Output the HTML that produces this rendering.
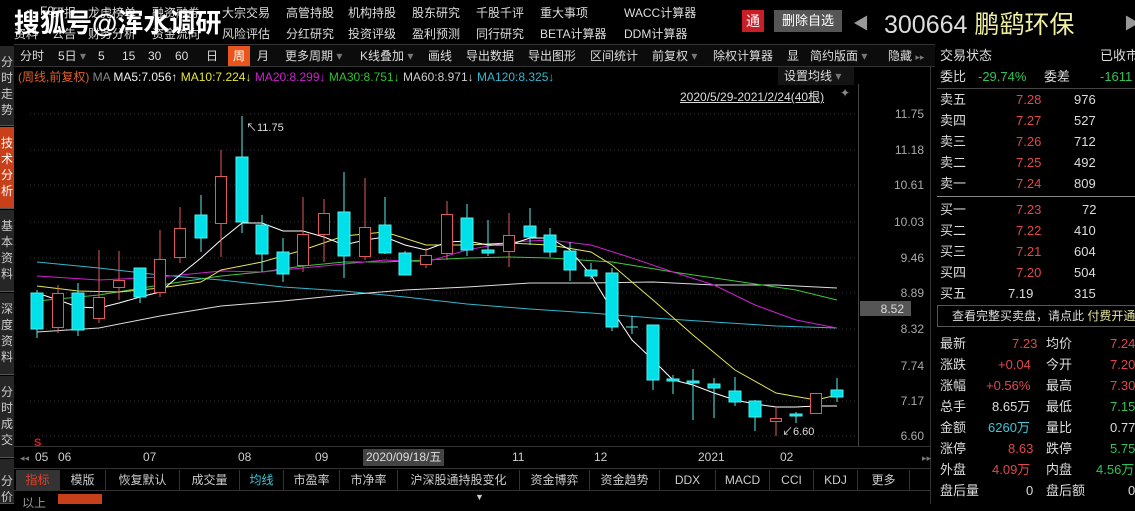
<!DOCTYPE html>
<html><head><meta charset="utf-8"><style>
*{margin:0;padding:0;box-sizing:border-box}
body{width:1135px;height:504px;background:#000;overflow:hidden;position:relative;font-family:"Liberation Sans","Noto Sans CJK SC",sans-serif;font-size:12px;color:#ccc}
.a{position:absolute;white-space:nowrap}
.menu span{position:absolute;color:#ddd;font-size:12px;white-space:nowrap}
.tb{position:absolute;top:46px;height:20px;line-height:20px;color:#ddd;font-size:12px;white-space:nowrap}
.side{position:absolute;left:0;width:14px;background:#262626;color:#ccc;font-size:12px;line-height:16px;text-align:center;border-bottom:1px solid #555}
.r{position:absolute;left:940px;font-size:13px;line-height:21px;height:21px;color:#ddd;white-space:nowrap}
.red{color:#e0484e}.grn{color:#2fc35b}.cy{color:#3cc8d8}
.tab{position:absolute;top:470px;height:20px;line-height:20px;color:#ccc;font-size:12px;border-right:1px solid #333;text-align:center;white-space:nowrap}
</style></head><body>
<div class="menu">
<span style="left:40px;top:4px">F9</span><span style="left:52px;top:4px">研报</span><span style="left:88px;top:4px">龙虎榜单</span><span style="left:152px;top:4px">融资融券</span><span style="left:222px;top:4px">大宗交易</span><span style="left:286px;top:4px">高管持股</span><span style="left:348px;top:4px">机构持股</span><span style="left:412px;top:4px">股东研究</span><span style="left:476px;top:4px">千股千评</span><span style="left:540px;top:4px">重大事项</span><span style="left:624px;top:4px">WACC计算器</span>
<span style="left:14px;top:25px">资料</span><span style="left:52px;top:25px">公告</span><span style="left:88px;top:25px">财务分析</span><span style="left:152px;top:25px">资金流向</span>
<span style="left:222px;top:25px">风险评估</span><span style="left:286px;top:25px">分红研究</span><span style="left:348px;top:25px">投资评级</span><span style="left:412px;top:25px">盈利预测</span><span style="left:476px;top:25px">同行研究</span><span style="left:540px;top:25px">BETA计算器</span><span style="left:624px;top:25px">DDM计算器</span>
</div>
<div class="a" style="left:14px;top:3px;font-size:26px;color:#fff;font-weight:bold">搜狐号@浑水调研</div>
<div class="a" style="left:742px;top:10px;width:22px;height:22px;background:#c81e28;color:#fff;font-size:14px;text-align:center;line-height:22px">通</div>
<div class="a" style="left:774px;top:10px;width:68px;height:22px;background:#555;color:#fff;font-size:13px;text-align:center;line-height:22px">删除自选</div>
<div class="a" style="left:853px;top:10px;color:#999;font-size:16px">◀</div>
<div class="a" style="left:884px;top:5px;color:#ddd;font-size:25px">300664 <span style="color:#f0f0a0">鹏鹞环保</span></div>
<div class="a" style="left:1124px;top:10px;color:#999;font-size:16px">▶</div>
<div class="a" style="left:14px;top:44px;width:921px;height:1px;background:#333"></div>
<div class="a" style="left:14px;top:45px;width:921px;height:22px;background:#0c0c0c;border-bottom:1px solid #333"></div>
<div class="tb" style="left:20px">分时</div><div class="tb" style="left:58px">5日 <span style="color:#777">▾</span></div><div class="tb" style="left:98px">5</div><div class="tb" style="left:122px">15</div><div class="tb" style="left:148px">30</div><div class="tb" style="left:175px">60</div><div class="tb" style="left:206px">日</div>
<div class="tb" style="left:228px;width:22px;background:#e8561c;color:#fff;text-align:center">周</div><div class="tb" style="left:257px">月</div><div class="tb" style="left:285px">更多周期 <span style="color:#777">▾</span></div><div class="tb" style="left:360px">K线叠加 <span style="color:#777">▾</span></div><div class="tb" style="left:428px">画线</div><div class="tb" style="left:466px">导出数据</div><div class="tb" style="left:528px">导出图形</div><div class="tb" style="left:590px">区间统计</div><div class="tb" style="left:652px">前复权 <span style="color:#777">▾</span></div><div class="tb" style="left:713px">除权计算器</div><div class="tb" style="left:787px">显</div><div class="tb" style="left:810px">简约版面 <span style="color:#777">▾</span></div><div class="tb" style="left:888px">隐藏 <span style="color:#777;font-size:9px">▸▸</span></div>
<div class="a" style="left:18px;top:68px;font-size:12px"><span style="color:#e0602c">(周线,前复权)</span> <span style="color:#888">MA</span> <span style="color:#eee">MA5:7.056↑</span> <span style="color:#e6e632">MA10:7.224↓</span> <span style="color:#d020d0">MA20:8.299↓</span> <span style="color:#2ec02e">MA30:8.751↓</span> <span style="color:#ccc">MA60:8.971↓</span> <span style="color:#30b8d0">MA120:8.325↓</span></div>
<div class="a" style="left:778px;top:67px;width:76px;height:18px;background:#141414;color:#ddd;line-height:18px;padding-left:6px">设置均线 <span style="color:#777">▾</span></div>
<div class="a" style="left:680px;top:88px;color:#ddd;text-decoration:underline">2020/5/29-2021/2/24(40根)</div><div class="a" style="left:840px;top:86px;color:#888">✦</div>
<div class="side" style="top:46px;height:80px;padding-top:8px">分<br>时<br>走<br>势</div>
<div class="side" style="top:127px;height:82px;background:#c8401a;color:#fff;padding-top:8px">技<br>术<br>分<br>析</div>
<div class="side" style="top:210px;height:82px;padding-top:8px">基<br>本<br>资<br>料</div>
<div class="side" style="top:293px;height:82px;padding-top:8px">深<br>度<br>资<br>料</div>
<div class="side" style="top:376px;height:82px;padding-top:8px">分<br>时<br>成<br>交</div>
<div class="side" style="top:459px;height:45px;padding-top:14px">分<br>价</div>
<svg class="a" style="left:0;top:0" width="935" height="504">
<g stroke="#333" stroke-dasharray="1,3">
<line x1="30" x2="858" y1="114" y2="114"/><line x1="30" x2="858" y1="150" y2="150"/><line x1="30" x2="858" y1="185" y2="185"/><line x1="30" x2="858" y1="222" y2="222"/><line x1="30" x2="858" y1="258" y2="258"/><line x1="30" x2="858" y1="293" y2="293"/><line x1="30" x2="858" y1="329" y2="329"/><line x1="30" x2="858" y1="366" y2="366"/><line x1="30" x2="858" y1="401" y2="401"/><line x1="30" x2="858" y1="436" y2="436"/>
</g>
<line x1="858.5" x2="858.5" y1="84" y2="446" stroke="#444"/>
<line x1="930.5" x2="930.5" y1="67" y2="504" stroke="#333"/>
<line x1="14" x2="930" y1="446.5" y2="446.5" stroke="#333"/>
<g fill="#aaa" font-size="12" font-family="Liberation Sans" text-anchor="end">
<text x="924" y="118">11.75</text><text x="924" y="154">11.18</text><text x="924" y="189">10.61</text><text x="924" y="226">10.03</text><text x="924" y="262">9.46</text><text x="924" y="297">8.89</text><text x="924" y="333">8.32</text><text x="924" y="370">7.74</text><text x="924" y="405">7.17</text><text x="924" y="440">6.60</text>
</g>
<rect x="860" y="301" width="51" height="15" fill="#555"/><text x="904" y="313" fill="#ddd" font-size="12" text-anchor="end">8.52</text>
<g fill="none" stroke-width="1">
<polyline stroke="#30b8d0" points="37,262 99,268 160,275 221,280 283,287 344,291 405,297 467,304 530,309 591,313 653,318 714,322 776,326 837,328"/>
<polyline stroke="#ddd" points="37,332 99,328 160,316 221,306 283,301 344,295 405,290 467,287 530,283 591,283 653,282 714,285 776,285 837,288"/>
<polyline stroke="#3cc83c" points="37,301 99,295 160,285 221,276 262,272 303,266 344,262 385,262 426,260 467,258 509,257 550,258 612,262 673,272 735,281 796,290 837,300"/>
<polyline stroke="#d020d0" points="37,276 99,280 160,277 221,271 262,272 303,268 344,264 385,260 426,262 467,250 509,242 550,240 591,245 632,258 673,272 714,285 755,305 796,320 837,328"/>
<polyline stroke="#e6e650" points="37,286 78,291 119,292 160,288 201,282 221,270 262,262 303,250 344,236 385,232 426,245 467,245 509,243 550,245 591,252 612,265 653,300 693,335 735,370 776,393 816,400 837,395"/>
<polyline stroke="#fff" points="37,293 58,300 78,307 99,308 119,303 140,297 160,292 180,275 201,258 221,240 242,223 262,223 283,231 303,231 324,237 344,245 365,240 385,237 405,245 426,250 447,242 467,241 488,245 509,245 530,238 550,238 570,250 591,275 612,310 632,340 653,360 673,380 693,385 714,393 735,400 755,404 776,407 796,407 816,406 837,406"/>
</g>
<g stroke="#5ee" fill="#00e0e8">
<line x1="37" x2="37" y1="290" y2="338"/><rect x="31" y="293" width="12" height="36"/>
<line x1="78" x2="78" y1="283" y2="336"/><rect x="72" y="293" width="12" height="37"/>
<line x1="140" x2="140" y1="268" y2="303"/><rect x="134" y="268" width="12" height="29"/>
<line x1="201" x2="201" y1="195" y2="252"/><rect x="195" y="215" width="12" height="23"/>
<line x1="242" x2="242" y1="116" y2="233"/><rect x="236" y="157" width="12" height="65"/>
<line x1="262" x2="262" y1="215" y2="272"/><rect x="256" y="225" width="12" height="29"/>
<line x1="283" x2="283" y1="238" y2="282"/><rect x="277" y="252" width="12" height="22"/>
<line x1="344" x2="344" y1="172" y2="278"/><rect x="338" y="212" width="12" height="44"/>
<line x1="385" x2="385" y1="197" y2="254"/><rect x="379" y="225" width="12" height="28"/>
<line x1="405" x2="405" y1="251" y2="275"/><rect x="399" y="253" width="12" height="22"/>
<line x1="467" x2="467" y1="204" y2="256"/><rect x="461" y="218" width="12" height="32"/>
<line x1="488" x2="488" y1="220" y2="256"/><rect x="482" y="250" width="12" height="3"/>
<line x1="530" x2="530" y1="208" y2="245"/><rect x="524" y="226" width="12" height="11"/>
<line x1="550" x2="550" y1="228" y2="257"/><rect x="544" y="235" width="12" height="17"/>
<line x1="570" x2="570" y1="242" y2="281"/><rect x="564" y="251" width="12" height="19"/>
<line x1="591" x2="591" y1="263" y2="279"/><rect x="585" y="270" width="12" height="6"/>
<line x1="612" x2="612" y1="268" y2="331"/><rect x="606" y="273" width="12" height="54"/>
<line x1="632" x2="632" y1="316" y2="334"/><line x1="626" x2="638" y1="327" y2="327"/>
<line x1="653" x2="653" y1="325" y2="390"/><rect x="647" y="325" width="12" height="55"/>
<line x1="673" x2="673" y1="375" y2="394"/><rect x="667" y="379" width="12" height="2"/>
<line x1="693" x2="693" y1="369" y2="420"/><rect x="687" y="381" width="12" height="2"/>
<line x1="714" x2="714" y1="378" y2="418"/><rect x="708" y="384" width="12" height="4"/>
<line x1="735" x2="735" y1="377" y2="406"/><rect x="729" y="391" width="12" height="11"/>
<line x1="755" x2="755" y1="400" y2="431"/><rect x="749" y="401" width="12" height="16"/>
<line x1="796" x2="796" y1="412" y2="423"/><rect x="790" y="414" width="12" height="2"/>
<line x1="837" x2="837" y1="378" y2="402"/><rect x="831" y="390" width="12" height="7"/>
</g>
<g stroke="#e05a5a" fill="#000">
<line x1="58" x2="58" y1="285" y2="333"/><rect x="52.5" y="293.5" width="11" height="34"/>
<line x1="99" x2="99" y1="250" y2="323"/><rect x="93.5" y="297.5" width="11" height="21"/>
<line x1="119" x2="119" y1="251" y2="300"/><rect x="113.5" y="280.5" width="11" height="7"/>
<line x1="160" x2="160" y1="230" y2="297"/><rect x="154.5" y="259.5" width="11" height="33"/>
<line x1="180" x2="180" y1="207" y2="263"/><rect x="174.5" y="228.5" width="11" height="29"/>
<line x1="221" x2="221" y1="150" y2="257"/><rect x="215.5" y="176.5" width="11" height="47"/>
<line x1="303" x2="303" y1="197" y2="272"/><rect x="297.5" y="234.5" width="11" height="31"/>
<line x1="324" x2="324" y1="199" y2="262"/><rect x="318.5" y="213.5" width="11" height="21"/>
<line x1="365" x2="365" y1="178" y2="260"/><rect x="359.5" y="227.5" width="11" height="29"/>
<line x1="426" x2="426" y1="248" y2="268"/><rect x="420.5" y="255.5" width="11" height="9"/>
<line x1="447" x2="447" y1="201" y2="260"/><rect x="441.5" y="214.5" width="11" height="39"/>
<line x1="509" x2="509" y1="213" y2="267"/><rect x="503.5" y="235.5" width="11" height="16"/>
<line x1="776" x2="776" y1="406" y2="436"/><rect x="770.5" y="418.5" width="11" height="3"/>
<line x1="816" x2="816" y1="393" y2="414"/><rect x="810.5" y="393.5" width="11" height="20"/>
</g>
<text x="246" y="131" fill="#ddd" font-size="11">↖11.75</text>
<text x="782" y="435" fill="#ddd" font-size="11">↙6.60</text>
<text x="34" y="446" fill="#e02020" font-size="11" font-weight="bold">S</text>
<g fill="#ccc" font-size="12">
<text x="20" y="461" fill="#777" font-size="9">◂◂</text>
<text x="35" y="461">05</text><text x="58" y="461">06</text><text x="143" y="461">07</text><text x="238" y="461">08</text><text x="315" y="461">09</text>
<rect x="363" y="449" width="81" height="17" fill="#444"/><text x="366" y="461" fill="#ddd">2020/09/18/五</text>
<text x="512" y="461">11</text><text x="594" y="461">12</text><text x="698" y="461">2021</text><text x="780" y="461">02</text>
<text x="922" y="461" fill="#777" font-size="9">▸▸</text>
</g>
<line x1="14" x2="930" y1="468.5" y2="468.5" stroke="#333"/>
<line x1="14" x2="930" y1="490.5" y2="490.5" stroke="#333"/>
<text x="475" y="500" fill="#ccc" font-size="9">▼</text>
</svg>
<div class="tab" style="left:16px;width:44px;background:#333;color:#e0402c">指标</div>
<div class="tab" style="left:60px;width:46px">模版</div>
<div class="tab" style="left:106px;width:74px">恢复默认</div>
<div class="tab" style="left:180px;width:60px">成交量</div>
<div class="tab" style="left:240px;width:44px;color:#3cc8d8">均线</div>
<div class="tab" style="left:284px;width:56px">市盈率</div>
<div class="tab" style="left:340px;width:58px">市净率</div>
<div class="tab" style="left:398px;width:122px">沪深股通持股变化</div>
<div class="tab" style="left:520px;width:70px">资金博弈</div>
<div class="tab" style="left:590px;width:70px">资金趋势</div>
<div class="tab" style="left:660px;width:56px">DDX</div>
<div class="tab" style="left:716px;width:54px">MACD</div>
<div class="tab" style="left:770px;width:44px">CCI</div>
<div class="tab" style="left:814px;width:44px">KDJ</div>
<div class="tab" style="left:858px;width:52px">更多</div>
<div class="a" style="left:22px;top:494px;color:#999">以上</div>
<div class="a" style="left:58px;top:494px;width:44px;height:10px;background:#c8401a"></div>
<div class="r" style="top:45px">交易状态</div><div class="r" style="top:45px;left:1100px">已收市</div>
<div class="r" style="top:66px">委比</div><div class="r grn" style="top:66px;left:978px">-29.74%</div><div class="r" style="top:66px;left:1044px">委差</div><div class="r grn" style="top:66px;left:1100px">-1611</div>
<div class="a" style="left:937px;top:88px;width:198px;height:1px;background:#444"></div>
<div class="a" style="left:937px;top:196px;width:198px;height:1px;background:#888"></div>
<div class="r" style="top:89px">卖五</div><div class="r red" style="top:89px;left:1016px">7.28</div><div class="r" style="top:89px;left:1074px">976</div>
<div class="r" style="top:110px">卖四</div><div class="r red" style="top:110px;left:1016px">7.27</div><div class="r" style="top:110px;left:1074px">527</div>
<div class="r" style="top:131px">卖三</div><div class="r red" style="top:131px;left:1016px">7.26</div><div class="r" style="top:131px;left:1074px">712</div>
<div class="r" style="top:152px">卖二</div><div class="r red" style="top:152px;left:1016px">7.25</div><div class="r" style="top:152px;left:1074px">492</div>
<div class="r" style="top:173px">卖一</div><div class="r red" style="top:173px;left:1016px">7.24</div><div class="r" style="top:173px;left:1074px">809</div>
<div class="r" style="top:199px">买一</div><div class="r red" style="top:199px;left:1016px">7.23</div><div class="r" style="top:199px;left:1082px">72</div>
<div class="r" style="top:220px">买二</div><div class="r red" style="top:220px;left:1016px">7.22</div><div class="r" style="top:220px;left:1074px">410</div>
<div class="r" style="top:241px">买三</div><div class="r red" style="top:241px;left:1016px">7.21</div><div class="r" style="top:241px;left:1074px">604</div>
<div class="r" style="top:262px">买四</div><div class="r red" style="top:262px;left:1016px">7.20</div><div class="r" style="top:262px;left:1074px">504</div>
<div class="r" style="top:283px">买五</div><div class="r" style="top:283px;left:1008px">7.19</div><div class="r" style="top:283px;left:1074px">315</div>
<div class="a" style="left:937px;top:305px;width:200px;height:22px;border:1px solid #555;color:#ddd;font-size:12px;line-height:20px;padding-left:14px">查看完整买卖盘，请点此 <span style="color:#e6e6a0">付费开通</span></div>
<div class="r" style="top:333px">最新</div><div class="r red" style="top:333px;left:1012px">7.23</div><div class="r" style="top:333px;left:1046px">均价</div><div class="r red" style="top:333px;left:1110px">7.24</div>
<div class="r" style="top:354px">涨跌</div><div class="r red" style="top:354px;left:998px">+0.04</div><div class="r" style="top:354px;left:1046px">今开</div><div class="r red" style="top:354px;left:1110px">7.20</div>
<div class="r" style="top:375px">涨幅</div><div class="r red" style="top:375px;left:986px">+0.56%</div><div class="r" style="top:375px;left:1046px">最高</div><div class="r red" style="top:375px;left:1110px">7.30</div>
<div class="r" style="top:396px">总手</div><div class="r" style="top:396px;left:992px">8.65万</div><div class="r" style="top:396px;left:1046px">最低</div><div class="r grn" style="top:396px;left:1110px">7.15</div>
<div class="r" style="top:417px">金额</div><div class="r cy" style="top:417px;left:988px">6260万</div><div class="r" style="top:417px;left:1046px">量比</div><div class="r" style="top:417px;left:1110px">0.77</div>
<div class="r" style="top:438px">涨停</div><div class="r red" style="top:438px;left:1008px">8.63</div><div class="r" style="top:438px;left:1046px">跌停</div><div class="r grn" style="top:438px;left:1110px">5.75</div>
<div class="r" style="top:459px">外盘</div><div class="r red" style="top:459px;left:992px">4.09万</div><div class="r" style="top:459px;left:1046px">内盘</div><div class="r grn" style="top:459px;left:1096px">4.56万</div>
<div class="r" style="top:480px">盘后量</div><div class="r" style="top:480px;left:1026px">0</div><div class="r" style="top:480px;left:1046px">盘后额</div><div class="r" style="top:480px;left:1128px">0</div>
</body></html>
